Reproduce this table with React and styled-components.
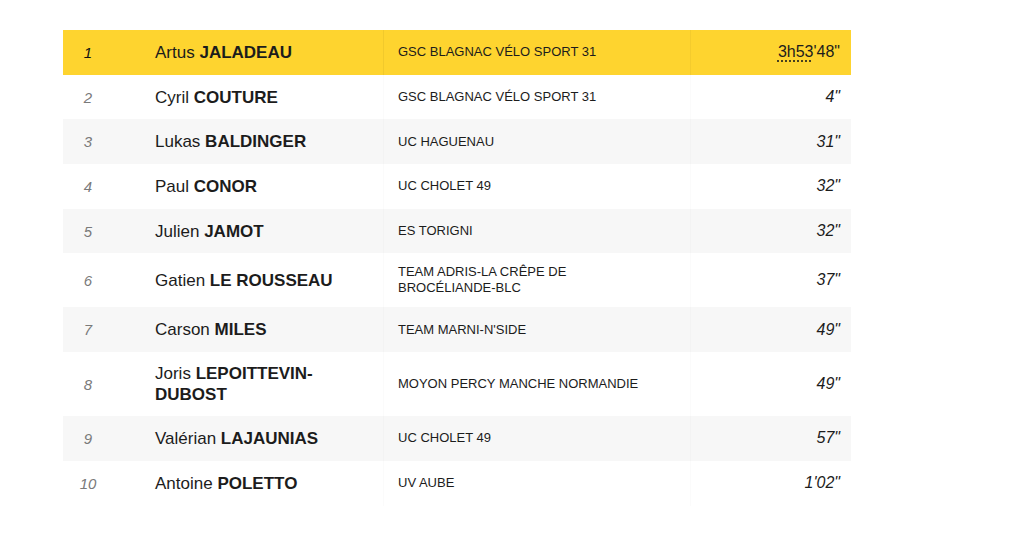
import React from 'react';
import styled, { createGlobalStyle } from 'styled-components';

const GlobalStyle = createGlobalStyle`
  body {
    margin: 0;
    background: #fff;
    font-family: "Liberation Sans", Arial, sans-serif;
    color: #1c1c1c;
  }
`;

const Page = styled.div`
  padding: 30px 0 0 63px;
`;

const Table = styled.div`
  width: 788px;
  display: flex;
  flex-direction: column;
`;

const Row = styled.div`
  display: grid;
  grid-template-columns: 50px 270px 307px 161px;
  align-items: stretch;
  min-height: 44.7px;
  background: ${(p) => (p.$leader ? '#fed42f' : p.$odd ? '#f7f7f7' : '#fff')};
`;

const Cell = styled.div`
  display: flex;
  align-items: center;
  padding: 11px 0;
  box-sizing: border-box;
`;

const Rank = styled(Cell)`
  justify-content: center;
  font-style: italic;
  font-size: 15px;
  color: ${(p) => (p.$leader ? '#111' : '#7a7a7a')};
`;

const Name = styled(Cell)`
  padding-left: 42px;
  padding-right: 40px;
  font-size: 17px;
  line-height: 21px;
  b {
    font-weight: 700;
  }
`;

const Team = styled(Cell)`
  padding-left: 14px;
  padding-right: 40px;
  font-size: 13px;
  line-height: 16px;
  text-transform: uppercase;
  border-left: 1px solid ${(p) => (p.$leader ? 'rgba(0,0,0,0.05)' : 'rgba(0,0,0,0.015)')};
`;

const Time = styled(Cell)`
  justify-content: flex-end;
  padding-right: 11px;
  font-size: 16px;
  font-style: ${(p) => (p.$leader ? 'normal' : 'italic')};
  border-left: 1px solid ${(p) => (p.$leader ? 'rgba(0,0,0,0.04)' : 'rgba(0,0,0,0.015)')};
  abbr {
    text-decoration: underline dotted;
    text-underline-offset: 3px;
  }
`;

const riders = [
  { rank: 1, first: 'Artus', last: 'JALADEAU', team: 'GSC Blagnac Vélo Sport 31', time: "3h53'48\"" },
  { rank: 2, first: 'Cyril', last: 'COUTURE', team: 'GSC Blagnac Vélo Sport 31', time: '4"' },
  { rank: 3, first: 'Lukas', last: 'BALDINGER', team: 'UC Haguenau', time: '31"' },
  { rank: 4, first: 'Paul', last: 'CONOR', team: 'UC Cholet 49', time: '32"' },
  { rank: 5, first: 'Julien', last: 'JAMOT', team: 'ES Torigni', time: '32"' },
  { rank: 6, first: 'Gatien', last: 'LE ROUSSEAU', team: 'Team Adris-La Crêpe de Brocéliande-BLC', time: '37"' },
  { rank: 7, first: 'Carson', last: 'MILES', team: "Team Marni-N'Side", time: '49"' },
  { rank: 8, first: 'Joris', last: 'LEPOITTEVIN-DUBOST', team: 'Moyon Percy Manche Normandie', time: '49"' },
  { rank: 9, first: 'Valérian', last: 'LAJAUNIAS', team: 'UC Cholet 49', time: '57"' },
  { rank: 10, first: 'Antoine', last: 'POLETTO', team: 'UV Aube', time: "1'02\"" },
];

const App = () => (
  <Page>
    <GlobalStyle />
    <Table>
      {riders.map((r, i) => {
        const leader = i === 0;
        return (
          <Row key={r.rank} $leader={leader} $odd={i % 2 === 0}>
            <Rank $leader={leader}>{r.rank}</Rank>
            <Name>
              <span>
                {r.first} <b>{r.last}</b>
              </span>
            </Name>
            <Team $leader={leader}>{r.team}</Team>
            <Time $leader={leader}>
              {leader ? (
                <span>
                  <abbr title="3 heures 53 minutes">3h53</abbr>'48"
                </span>
              ) : (
                r.time
              )}
            </Time>
          </Row>
        );
      })}
    </Table>
  </Page>
);

export default App;
